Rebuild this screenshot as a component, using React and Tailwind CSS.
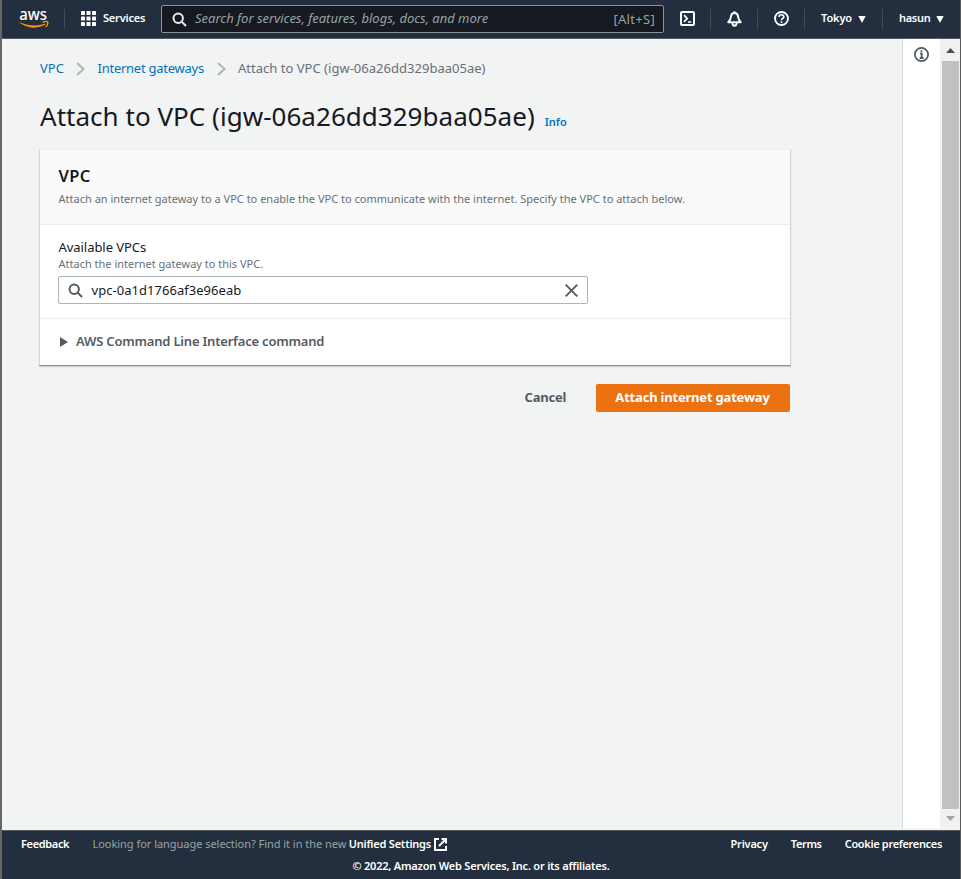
import React from "react";

const Divider = () => <span className="h-5 w-px shrink-0 bg-[#414d5c]" />;

function Caret() {
  return (
    <svg width="8" height="7" viewBox="0 0 8 7" fill="#fff" className="shrink-0">
      <path d="M0.3 0H7.7L4 7Z" />
    </svg>
  );
}

function AwsLogo() {
  return (
    <svg width="31" height="20" viewBox="0 0 31 20" className="shrink-0 overflow-visible">
      <text x="0.2" y="10.6" textLength="27.8" lengthAdjust="spacingAndGlyphs" fontFamily="Noto Sans, sans-serif" fontWeight="500" fontSize="16.5" fill="#fff">aws</text>
      <path d="M-0.5 12.6C8 17.2 18 17.8 26 14.6L26.6 15.6C18 20.4 7 19.6 -0.5 12.6Z" fill="#f90" />
      <path d="M23.6 13.3C25.6 12.3 28 12.3 28.8 13.1C29 14.9 28.2 16.8 26.8 18" fill="none" stroke="#f90" strokeWidth="1.4" />
    </svg>
  );
}

function Search({ className, size = 15 }) {
  return (
    <svg width={size} height={size} viewBox="0 0 15 15" fill="none" stroke="currentColor" strokeWidth="2" className={className}>
      <circle cx="6.2" cy="6.2" r="4.7" />
      <path d="M9.6 9.6L14 14" />
    </svg>
  );
}

function Chevron() {
  return (
    <svg width="9" height="14" viewBox="0 0 9 14" fill="none" stroke="#aab7b8" strokeWidth="2" className="shrink-0">
      <path d="M1 1L7.5 7L1 13" />
    </svg>
  );
}

function TopBar() {
  return (
    <header className="flex h-[39px] shrink-0 items-center border-b border-[#545b64] bg-[#232f3e] text-[11px] font-semibold text-white">
      <div className="flex w-[62px] pl-[17px]"><AwsLogo /></div>
      <Divider />
      <div className="flex w-[96px] items-center pl-4">
        <svg width="15" height="15" viewBox="0 0 15 15" fill="#fff" className="mb-px shrink-0">
          {[0, 5.5, 11].map((y) => [0, 5.5, 11].map((x) => <rect key={x + "-" + y} x={x} y={y} width="4" height="4" rx="0.6" />))}
        </svg>
        <span className="pb-0.5 pl-[7px] tracking-[-0.2px]">Services</span>
      </div>
      <div className="flex h-7 w-[503px] items-center rounded-[2px] border border-[#879596] bg-[#16191f] pr-2 pl-[10px] text-[13px] font-normal text-[#95a5a6]">
        <Search className="shrink-0 text-[#eaeded]" />
        <span className="flex-1 pl-2 tracking-[-0.02px] italic">Search for services, features, blogs, docs, and more</span>
        <span className="pt-0.5 tracking-[0.3px]">[Alt+S]</span>
      </div>
      <div className="flex w-[46px] justify-center pb-px">
        <svg width="15" height="15" viewBox="0 0 15 15" fill="none" stroke="#fff" strokeWidth="2">
          <rect x="1" y="1" width="13" height="13" rx="1" />
          <path d="M4 4.2L7.2 7.5L4 10.8M8 11H11.2" strokeWidth="1.7" />
        </svg>
      </div>
      <Divider />
      <div className="flex w-[46px] justify-center">
        <svg width="15" height="16" viewBox="0 0 15 16" fill="none" stroke="#fff" strokeWidth="1.9" strokeLinejoin="round">
          <path d="M7.5 0.2V2M1.2 11.2C3.3 9.4 3.7 8 4 5.3C4.3 3 5.7 2 7.5 2S10.7 3 11 5.3C11.3 8 11.7 9.4 13.8 11.2Z" />
          <path d="M5.3 11.5C5.3 15.8 9.7 15.8 9.7 11.5" />
        </svg>
      </div>
      <Divider />
      <div className="flex w-[46px] justify-center pb-px">
        <svg width="15" height="15" viewBox="0 0 15 15" fill="none" stroke="#fff" strokeWidth="1.9">
          <circle cx="7.5" cy="7.5" r="6.5" />
          <path d="M5.1 6C5.1 3.1 9.9 3.1 9.9 5.8C9.9 7.4 7.5 7.2 7.5 9.2M7.5 10.2V12" strokeWidth="1.6" />
        </svg>
      </div>
      <Divider />
      <div className="flex w-[77px] items-center justify-between pr-[16px] pl-4"><span className="pb-0.5 tracking-[-0.1px]">Tokyo</span><Caret /></div>
      <Divider />
      <div className="flex w-[77px] items-center justify-between pr-4 pl-4"><span className="pb-0.5 tracking-[-0.3px]">hasun</span><Caret /></div>
    </header>
  );
}

function Panel() {
  return (
    <section className="mt-[16px] ml-[37px] w-[752px] border border-t-[#eaeded] border-r-[#d0d5d8] border-b-[#879196] border-l-[#d0d5d8] bg-white shadow-[0_1px_1px_0_rgba(0,28,36,0.15)]">
      <div className="h-[75px] border-b border-[#eaeded] bg-[#fafafa] pt-[14px] pl-[18.5px]">
        <h2 className="text-[16.5px] leading-6 font-semibold tracking-[0.4px] text-[#16191f]">VPC</h2>
        <p className="text-[11px] leading-[22px] tracking-[0.008px] text-[#687078]">Attach an internet gateway to a VPC to enable the VPC to communicate with the internet. Specify the VPC to attach below.</p>
      </div>
      <div className="h-[94px] border-b border-[#eaeded] pt-[13px] pl-[18px]">
        <div className="pl-[0.5px] text-[13px] leading-[19px] tracking-[-0.05px] text-[#16191f]">Available VPCs</div>
        <div className="pl-[0.5px] text-[11px] leading-[14px] text-[#687078]">Attach the internet gateway to this VPC.</div>
        <div className="mt-[5px] flex h-7 w-[530px] items-center rounded-[2px] border border-[#aab7b8] pr-[9px] pl-[9px] text-[13px] text-[#16191f]">
          <Search className="shrink-0 text-[#545b64]" />
          <span className="flex-1 pt-0.5 pl-[8.5px] tracking-[0.04px]">vpc-0a1d1766af3e96eab</span>
          <svg width="13" height="13" viewBox="0 0 13 13" stroke="#545b64" strokeWidth="1.9"><path d="M0.7 0.7L12.3 12.3M12.3 0.7L0.7 12.3" /></svg>
        </div>
      </div>
      <div className="flex h-[46px] items-center pl-[20px] text-[13px] font-semibold text-[#545b64]">
        <svg width="8" height="10" viewBox="0 0 8 10" fill="#545b64" className="shrink-0"><path d="M0 0L8 5L0 10Z" /></svg>
        <span className="pl-[8px] tracking-[-0.2px]">AWS Command Line Interface command</span>
      </div>
    </section>
  );
}

function ScrollBar() {
  return (
    <div className="flex w-[20px] shrink-0 flex-col items-center bg-[#f1f1f1]">
      <div className="flex h-[22px] items-center"><svg width="9" height="5" viewBox="0 0 9 5" fill="#505050"><path d="M0 5L4.5 0L9 5Z" /></svg></div>
      <div className="w-[17px] flex-1 bg-[#c1c1c1]" />
      <div className="flex h-[21px] items-center pb-0.5"><svg width="9" height="5" viewBox="0 0 9 5" fill="#a3a3a3"><path d="M0 0L4.5 5L9 0Z" /></svg></div>
    </div>
  );
}

export default function App() {
  return (
    <div className="flex h-[879px] w-[961px] flex-col border-r border-l-2 border-r-[#5a5a5a] border-l-[#666] bg-[#f2f3f3] font-['Noto_Sans','Open_Sans',sans-serif]">
      <TopBar />
      <div className="flex min-h-0 flex-1">
        <main className="flex-1">
          <nav className="mt-[20px] ml-[38px] flex h-5 items-center text-[13px] text-[#0073bb]">
            <span className="w-[36px]">VPC</span><Chevron />
            <span className="w-[132px] pl-[12.5px] tracking-[-0.25px] whitespace-nowrap">Internet gateways</span><Chevron />
            <span className="pl-[12px] tracking-[0.02px] text-[#687078]">Attach to VPC (igw-06a26dd329baa05ae)</span>
          </nav>
          <div className="mt-[21px] ml-[38px] flex h-[33px] items-baseline">
            <h1 className="text-[26px] leading-8 tracking-[0.03px] text-[#16191f]">Attach to VPC (igw-06a26dd329baa05ae)</h1>
            <span className="ml-[10px] text-[11px] font-semibold text-[#0073bb]">Info</span>
          </div>
          <Panel />
          <div className="mt-[18px] ml-[522px] flex h-7 items-center text-[13px] font-bold">
            <span className="w-[72px] pl-[0.5px] tracking-[-0.2px] text-[#545b64]">Cancel</span>
            <button className="h-7 w-[194px] rounded-[2px] bg-[#ec7211] pr-px tracking-[-0.2px] text-white">Attach internet gateway</button>
          </div>
        </main>
        <aside className="mb-0.5 flex w-[38px] shrink-0 justify-center border-l border-[#d5dbdb] bg-white pt-[8px]">
          <svg width="15" height="15" viewBox="0 0 15 15" fill="none" stroke="#545b64" strokeWidth="1.8">
            <circle cx="7.5" cy="7.5" r="6.6" />
            <path d="M7.5 3.2V5.2M6 6.7H7.7V11M5.7 11H9.5" />
          </svg>
        </aside>
        <ScrollBar />
      </div>
      <footer className="h-[49px] shrink-0 border-t border-[#545b64] bg-[#232f3e] text-[11px] font-semibold tracking-[-0.21px] text-white">
        <div className="flex h-[27px] items-center pl-[19px] whitespace-nowrap">
          <span className="w-[71.5px] tracking-[-0.35px]">Feedback</span>
          <span className="font-normal tracking-[-0.035px] text-[#95a5a6]">Looking for language selection? Find it in the new</span>
          <span className="pl-[2.5px]">Unified Settings</span>
          <svg width="13" height="13" viewBox="0 0 13 13" fill="none" stroke="#fff" strokeWidth="2" className="ml-[3px]">
            <path d="M5 1H1V12H12V8M7.5 1H12V5.5M12 1L5 8" />
          </svg>
          <span className="ml-auto">Privacy</span><span className="ml-[23px] tracking-[-0.35px]">Terms</span><span className="mr-[18px] ml-[23px] tracking-[-0.33px]">Cookie preferences</span>
        </div>
        <div className="text-center leading-[15px]">© 2022, Amazon Web Services, Inc. or its affiliates.</div>
      </footer>
    </div>
  );
}
